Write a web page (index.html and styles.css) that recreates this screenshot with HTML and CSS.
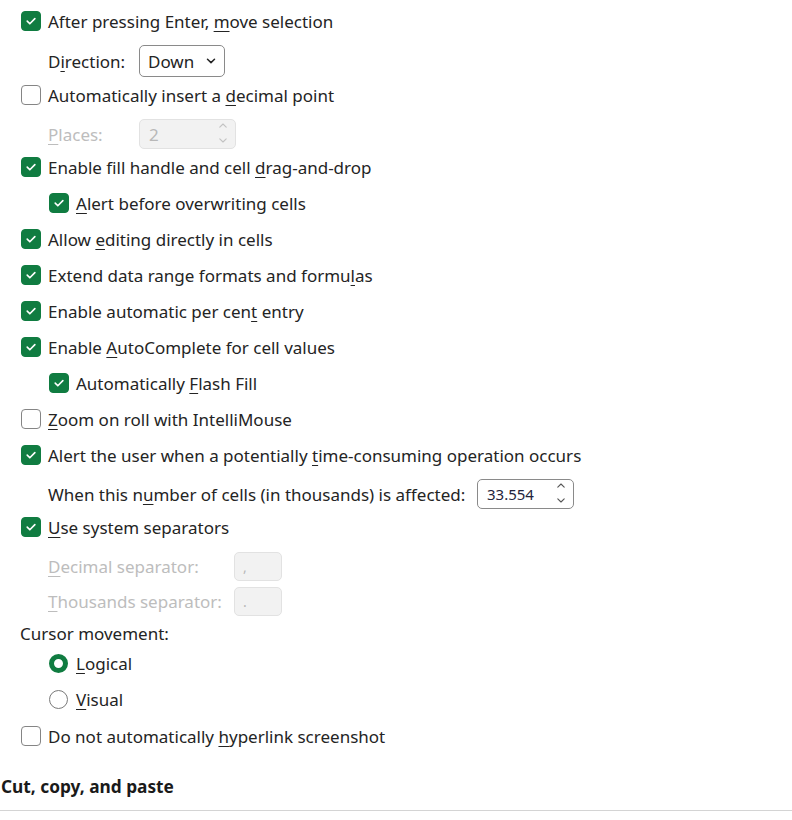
FILE: index.html
```html
<!DOCTYPE html>
<html>
<head>
<meta charset="utf-8">
<link rel="stylesheet" href="styles.css">
</head>
<body>
<div class="page">
  <div class="row"><span class="cb on"><svg viewBox="0 0 20 20"><path d="M5.8 10.2l2.9 2.9L14.3 7.4"/></svg></span><span class="lbl">After pressing Enter, <u>m</u>ove selection</span></div>
  <div class="row r-dir indent1"><span class="lbl col1">D<u>i</u>rection:</span><span class="select">Down<svg class="chev" viewBox="0 0 10 6"><path d="M1.5 1.2L5 4.6l3.5-3.4"/></svg></span></div>
  <div class="row"><span class="cb"></span><span class="lbl">Automatically insert a <u>d</u>ecimal point</span></div>
  <div class="row r-box indent1"><span class="lbl dis col1"><u>P</u>laces:</span><span class="spin dis-box places"><span class="val">2</span><span class="arrows"><svg viewBox="0 0 8 5"><path d="M0.8 4.2L4 1l3.2 3.2"/></svg><svg viewBox="0 0 8 5"><path d="M0.8 0.8L4 4l3.2-3.2"/></svg></span></span></div>
  <div class="row"><span class="cb on"><svg viewBox="0 0 20 20"><path d="M5.8 10.2l2.9 2.9L14.3 7.4"/></svg></span><span class="lbl">Enable fill handle and cell <u>d</u>rag-and-drop</span></div>
  <div class="row indent2"><span class="cb on"><svg viewBox="0 0 20 20"><path d="M5.8 10.2l2.9 2.9L14.3 7.4"/></svg></span><span class="lbl"><u>A</u>lert before overwriting cells</span></div>
  <div class="row"><span class="cb on"><svg viewBox="0 0 20 20"><path d="M5.8 10.2l2.9 2.9L14.3 7.4"/></svg></span><span class="lbl">Allow <u>e</u>diting directly in cells</span></div>
  <div class="row"><span class="cb on"><svg viewBox="0 0 20 20"><path d="M5.8 10.2l2.9 2.9L14.3 7.4"/></svg></span><span class="lbl">Extend data range formats and formu<u>l</u>as</span></div>
  <div class="row"><span class="cb on"><svg viewBox="0 0 20 20"><path d="M5.8 10.2l2.9 2.9L14.3 7.4"/></svg></span><span class="lbl">Enable automatic per cen<u>t</u> entry</span></div>
  <div class="row"><span class="cb on"><svg viewBox="0 0 20 20"><path d="M5.8 10.2l2.9 2.9L14.3 7.4"/></svg></span><span class="lbl">Enable <u>A</u>utoComplete for cell values</span></div>
  <div class="row indent2"><span class="cb on"><svg viewBox="0 0 20 20"><path d="M5.8 10.2l2.9 2.9L14.3 7.4"/></svg></span><span class="lbl">Automatically <u>F</u>lash Fill</span></div>
  <div class="row"><span class="cb"></span><span class="lbl"><u>Z</u>oom on roll with IntelliMouse</span></div>
  <div class="row"><span class="cb on"><svg viewBox="0 0 20 20"><path d="M5.8 10.2l2.9 2.9L14.3 7.4"/></svg></span><span class="lbl">Alert the user when a potentially <u>t</u>ime-consuming operation occurs</span></div>
  <div class="row r-box indent1"><span class="lbl num-lbl">When this n<u>u</u>mber of cells (in thousands) is affected:</span><span class="spin num"><span class="val">33.554</span><span class="arrows"><svg viewBox="0 0 8 5"><path d="M0.8 4.2L4 1l3.2 3.2"/></svg><svg viewBox="0 0 8 5"><path d="M0.8 0.8L4 4l3.2-3.2"/></svg></span></span></div>
  <div class="row"><span class="cb on"><svg viewBox="0 0 20 20"><path d="M5.8 10.2l2.9 2.9L14.3 7.4"/></svg></span><span class="lbl"><u>U</u>se system separators</span></div>
  <div class="row r-dec indent1"><span class="lbl dis sep-lbl"><u>D</u>ecimal separator:</span><span class="dis-box sepbox"><span class="val">,</span></span></div>
  <div class="row r-thou indent1"><span class="lbl dis sep-lbl"><u>T</u>housands separator:</span><span class="dis-box sepbox"><span class="val">.</span></span></div>
  <div class="row r-cursor"><span class="lbl">Cursor movement:</span></div>
  <div class="row indent2"><span class="radio on"></span><span class="lbl"><u>L</u>ogical</span></div>
  <div class="row r-visual indent2"><span class="radio"></span><span class="lbl"><u>V</u>isual</span></div>
  <div class="row"><span class="cb"></span><span class="lbl">Do not automatically <u>h</u>yperlink screenshot</span></div>
  <h2 class="section">Cut, copy, and paste</h2>
</div>
</body>
</html>
```
FILE: styles.css
```css
html, body {
  margin: 0;
  padding: 0;
  background: #ffffff;
}
body {
  font-family: "Noto Sans", "Open Sans", "DejaVu Sans", sans-serif;
  font-size: 17px;
  color: #242424;
  overflow: hidden;
}
.page {
  width: 792px;
  padding-top: 3px;
}
.row {
  height: 36px;
  display: flex;
  align-items: center;
  padding-left: 21px;
  box-sizing: border-box;
}
.row.indent1 { padding-left: 48px; }
.row.indent2 { padding-left: 49px; }
/* rows holding a field: the field fills the content box */
.r-dir { height: 38px; padding-top: 6px; }
.r-box { height: 36px; padding-top: 6px; }
.r-dec { height: 36px; padding-top: 7px; }
.r-thou { height: 35px; padding-top: 6px; }
.r-cursor { height: 29px; padding-top: 6px; padding-left: 20px; }
.r-visual { height: 37px; }
u {
  text-decoration-thickness: 1px;
  text-underline-offset: 3px;
}
.lbl { white-space: nowrap; }
.col1 { width: 91px; flex: none; }
.num-lbl { width: 429px; flex: none; }
.cb {
  width: 20px;
  height: 20px;
  box-sizing: border-box;
  border: 1.5px solid #858585;
  border-radius: 4px;
  margin-right: 7px;
  flex: none;
  display: flex;
  align-items: center;
  justify-content: center;
}
.cb.on {
  background: #107c41;
  border-color: #107c41;
}
.cb svg {
  width: 20px;
  height: 20px;
  fill: none;
  stroke: #ffffff;
  stroke-width: 1.8;
  stroke-linecap: round;
  stroke-linejoin: round;
}
.radio {
  width: 19px;
  height: 19px;
  box-sizing: border-box;
  border: 1.5px solid #7a7a7a;
  border-radius: 50%;
  margin-right: 8px;
  flex: none;
}
.radio.on {
  border: 5.5px solid #107c41;
}
.select {
  width: 86px;
  height: 32px;
  box-sizing: border-box;
  border: 1px solid #8a8a8a;
  border-radius: 5px;
  display: flex;
  align-items: center;
  padding-left: 8px;
}
.chev {
  width: 10px;
  height: 6px;
  fill: none;
  stroke: #242424;
  stroke-width: 1.5;
  stroke-linecap: round;
  stroke-linejoin: round;
  margin-left: auto;
  margin-right: 8px;
}
.spin {
  width: 97px;
  height: 30px;
  box-sizing: border-box;
  border-radius: 5px;
  display: flex;
  align-items: center;
  padding-left: 9px;
}
.dis-box {
  background: #f2f2f2;
  border: 1px solid #e2e2e2;
  color: #b8b8b8;
}
.num {
  border: 1px solid #8a8a8a;
  color: #24243c;
  font-size: 15px;
}
.arrows {
  margin-left: auto;
  margin-right: 8px;
  display: flex;
  flex-direction: column;
  gap: 10px;
  margin-top: -3px;
}
.arrows svg {
  width: 8px;
  height: 5px;
  fill: none;
  stroke: #555;
  stroke-width: 1.1;
  stroke-linecap: round;
  stroke-linejoin: round;
}
.places .arrows svg { stroke: #c2c2c2; }
.dis { color: #bdbdbd; }
.sep-lbl { width: 186px; flex: none; }
.sepbox {
  width: 48px;
  height: 29px;
  box-sizing: border-box;
  border-radius: 5px;
  display: flex;
  align-items: center;
  padding-left: 8px;
  font-size: 14px;
}
.section {
  margin: 0;
  padding: 21px 0 12px 1px;
  font-size: 17.3px;
  font-weight: bold;
  color: #1a1a1a;
  border-bottom: 1px solid #d4d4d4;
}
```
